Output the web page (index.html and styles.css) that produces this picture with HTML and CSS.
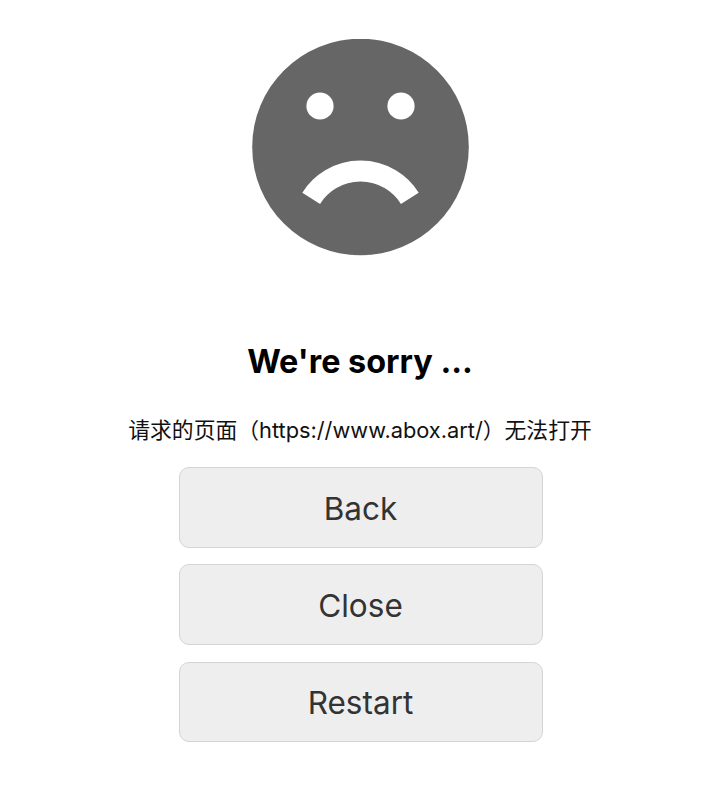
FILE: index.html
```html
<!DOCTYPE html>
<html lang="zh">
<head>
<meta charset="utf-8">
<title>We're sorry</title>
<link rel="stylesheet" href="styles.css">
</head>
<body>
<main class="page">
<svg class="face" viewBox="0 0 217 217" aria-hidden="true">
<circle cx="108.5" cy="108" r="108.3" fill="#666666"/>
<circle cx="68" cy="67" r="13.6" fill="#ffffff"/>
<circle cx="149" cy="67" r="13.6" fill="#ffffff"/>
<path d="M59.2 159.3A58.3 58.3 0 0 1 157.8 159.3" fill="none" stroke="#ffffff" stroke-width="21"/>
</svg>
<h1 class="title">We're sorry ...</h1>
<p class="message">请求的页面（https://www.abox.art/）无法打开</p>
<div class="actions">
<button class="btn">Back</button>
<button class="btn">Close</button>
<button class="btn">Restart</button>
</div>
</main>
</body>
</html>
```
FILE: styles.css
```css
* { box-sizing: border-box; }
html, body { margin: 0; height: 100%; background: #ffffff; }
body { font-family: "Inter", "Noto Sans CJK SC", sans-serif; }
.page { display: flex; flex-direction: column; align-items: center; padding-top: 39px; }
.face { display: block; width: 217px; height: 217px; }
.title { margin: 84px 0 0; height: 44px; font-size: 32.4px; line-height: 44px; font-weight: 700; color: #000000; }
.message { margin: 32px 0 0; height: 28px; font-size: 21.8px; line-height: 28px; color: #111111; }
.actions { display: flex; flex-direction: column; gap: 16.5px; margin-top: 23px; padding-left: 1px; }
.btn { display: block; width: 364px; height: 80.8px; padding: 2px 0 0; background: #eeeeee; border: 1.5px solid #d4d4d4; border-radius: 10px; font-family: "Inter", sans-serif; font-size: 31.5px; color: #333333; text-align: center; }
```
